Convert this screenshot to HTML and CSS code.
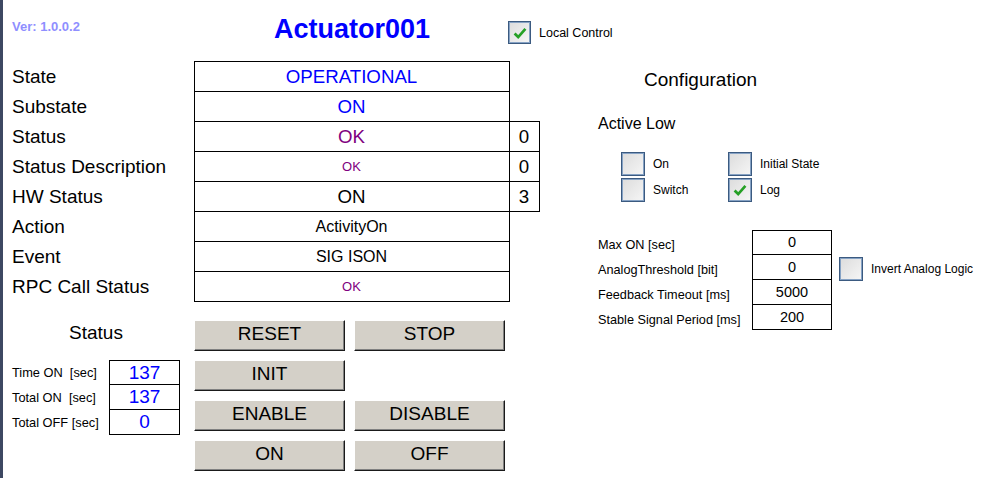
FILE: index.html
```html
<!DOCTYPE html>
<html>
<head>
    <title>Actuator001</title>
    <link rel="stylesheet" href="styles.css">
</head>
<body>
    <header class="top">
        <div class="version">Ver: 1.0.0.2</div>
        <h1 class="title">Actuator001</h1>
        <div class="check-item local">
            <span class="box"><svg class="tick" viewBox="0 0 20 20"><path d="M4 10.5 L8 14.5 L16 5.5"/></svg></span>
            <span>Local Control</span>
        </div>
    </header>
    <main class="panel">
        <section class="left">
            <table class="state">
                <colgroup><col class="c-label"><col class="c-val"><col class="c-extra"></colgroup>
                <tr><td class="label">State</td><td class="val blue">OPERATIONAL</td><td></td></tr>
                <tr><td class="label">Substate</td><td class="val blue">ON</td><td></td></tr>
                <tr><td class="label">Status</td><td class="val purple">OK</td><td class="extra">0</td></tr>
                <tr><td class="label">Status Description</td><td class="val purple small">OK</td><td class="extra">0</td></tr>
                <tr><td class="label">HW Status</td><td class="val">ON</td><td class="extra">3</td></tr>
                <tr><td class="label">Action</td><td class="val mid">ActivityOn</td><td></td></tr>
                <tr><td class="label">Event</td><td class="val mid">SIG ISON</td><td></td></tr>
                <tr><td class="label">RPC Call Status</td><td class="val purple small">OK</td><td></td></tr>
            </table>
            <div class="lower">
                <div class="counters">
                    <h2 class="counters-title">Status</h2>
                    <div class="counter-grid">
                        <span class="counter-label">Time ON&nbsp; [sec]</span><span class="num first">137</span>
                        <span class="counter-label">Total ON&nbsp; [sec]</span><span class="num">137</span>
                        <span class="counter-label">Total OFF [sec]</span><span class="num">0</span>
                    </div>
                </div>
                <div class="buttons">
                    <button>RESET</button>
                    <button>STOP</button>
                    <button>INIT</button>
                    <span></span>
                    <button>ENABLE</button>
                    <button>DISABLE</button>
                    <button>ON</button>
                    <button>OFF</button>
                </div>
            </div>
        </section>
        <section class="config">
            <h2 class="config-title">Configuration</h2>
            <div class="active-low">Active Low</div>
            <div class="flags">
                <div class="check-item"><span class="box"></span><span>On</span></div>
                <div class="check-item"><span class="box"></span><span>Initial State</span></div>
                <div class="check-item"><span class="box"></span><span>Switch</span></div>
                <div class="check-item"><span class="box"><svg class="tick" viewBox="0 0 20 20"><path d="M4 10.5 L8 14.5 L16 5.5"/></svg></span><span>Log</span></div>
            </div>
            <div class="params">
                <span class="param-label">Max ON [sec]</span><span class="param-val first">0</span>
                <span class="param-label">AnalogThreshold [bit]</span><span class="param-val">0</span>
                <span class="param-label">Feedback Timeout [ms]</span><span class="param-val">5000</span>
                <span class="param-label">Stable Signal Period [ms]</span><span class="param-val">200</span>
                <div class="check-item invert"><span class="box"></span><span>Invert Analog Logic</span></div>
            </div>
        </section>
    </main>
</body>
</html>
```

FILE: styles.css
```css
body {
    margin: 0;
    min-height: 100vh;
    box-sizing: border-box;
    border-left: 3px solid #3d4862;
    background-color: #FFFFFF;
    color: #000000;
    font-family: "Liberation Sans", Arial, sans-serif;
}
.top {
    display: flex;
    align-items: flex-start;
    height: 61px;
    padding-left: 9px;
}
.version {
    width: 262px;
    margin-top: 20px;
    font-size: 13px;
    line-height: 13px;
    font-weight: bold;
    color: #8f8fff;
}
.title {
    width: 234px;
    margin: 16px 0 0;
    font-size: 27px;
    line-height: 27px;
    color: #0000FF;
}
/* checkboxes */
.check-item {
    display: flex;
    align-items: center;
    gap: 8px;
    font-size: 12px;
}
.box {
    width: 24px;
    height: 24px;
    box-sizing: border-box;
    display: flex;
    align-items: center;
    justify-content: center;
    border: 1px solid #3b5a80;
    box-shadow: inset 0 0 0 1px #86a2c4;
    background: linear-gradient(135deg, #dcdcdc, #f6f6f6);
}
.tick {
    width: 18px;
    height: 18px;
}
.tick path {
    fill: none;
    stroke: #25a025;
    stroke-width: 3;
}
.local {
    margin-top: 21px;
    font-size: 12.5px;
}
.local .box {
    width: 23px;
    height: 23px;
}
.panel {
    display: flex;
    padding-left: 9px;
}
.left {
    width: 528px;
}
/* state table */
.state {
    border-collapse: collapse;
    table-layout: fixed;
    width: 527px;
}
.c-label { width: 182px; }
.c-val { width: 315px; }
.c-extra { width: 30px; }
.state td {
    height: 29px;
    padding: 0;
}
.state .label {
    font-size: 19px;
}
.state .val {
    border: 1px solid #000000;
    text-align: center;
    font-size: 18.7px;
}
.state .extra {
    border: 1px solid #000000;
    text-align: center;
    font-size: 18.7px;
}
.blue { color: #0000FF; }
.purple { color: #800080; }
.state .small { font-size: 13px; }
.state .mid { font-size: 16px; }
.lower {
    display: flex;
    margin-top: 18px;
}
.counters {
    width: 182px;
}
.counters-title {
    width: 168px;
    margin: 3px 0 0;
    font-size: 19px;
    line-height: 19px;
    font-weight: normal;
    text-align: center;
}
.counter-grid {
    display: grid;
    grid-template-columns: 97px 71px;
    grid-auto-rows: 25px;
    margin-top: 18px;
}
.counter-label {
    font-size: 12.8px;
    line-height: 25px;
}
.num {
    border: 1px solid #000000;
    border-top: none;
    text-align: center;
    font-size: 19px;
    line-height: 24px;
    color: #0000FF;
}
.num.first {
    border-top: 1px solid #000000;
    line-height: 23px;
}
.buttons {
    display: grid;
    grid-template-columns: 151px 151px;
    grid-auto-rows: 31px;
    column-gap: 9px;
    row-gap: 9px;
}
.buttons button {
    margin: 0;
    padding: 0 0 3px;
    font-family: "Liberation Sans", Arial, sans-serif;
    font-size: 19px;
    color: #000000;
    background-color: #d4d0c8;
    border: 1px solid;
    border-color: #ffffff #1a1a1a #1a1a1a #ffffff;
    box-shadow: inset -1px -1px #808080;
}
/* configuration */
.config {
    margin-left: 58px;
}
.config-title {
    margin: 9px 0 0 46px;
    font-size: 19px;
    line-height: 19px;
    font-weight: normal;
}
.active-low {
    margin-top: 27px;
    font-size: 16px;
    line-height: 16px;
}
.flags {
    display: grid;
    grid-template-columns: 107px auto;
    grid-auto-rows: 24px;
    row-gap: 2px;
    margin: 20px 0 0 23px;
}
.params {
    display: grid;
    grid-template-columns: 154px 80px auto;
    grid-auto-rows: 25px;
    margin-top: 28px;
}
.param-label {
    grid-column: 1;
    font-size: 12.7px;
    line-height: 25px;
    padding-top: 3px;
}
.param-val {
    grid-column: 2;
    border: 1px solid #000000;
    border-top: none;
    text-align: center;
    font-size: 14.5px;
    line-height: 24px;
}
.param-val.first {
    border-top: 1px solid #000000;
    line-height: 23px;
}
.invert {
    grid-column: 3;
    grid-row: 2;
    margin: 2px 0 0 7px;
    align-self: start;
}
```
